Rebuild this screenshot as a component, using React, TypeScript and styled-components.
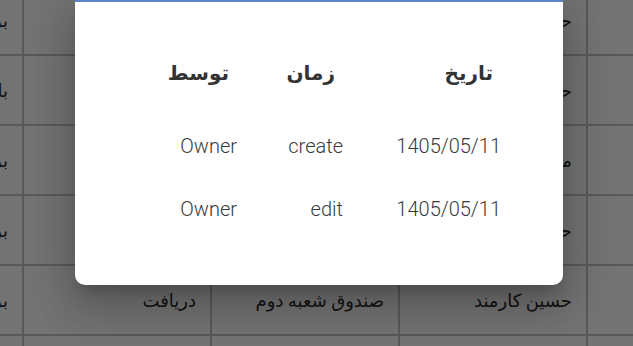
import React from "react";
import styled, { createGlobalStyle } from "styled-components";

const Global = createGlobalStyle`
  html, body { margin: 0; padding: 0; width: 633px; height: 346px; overflow: hidden; background: #fff; }
  * { box-sizing: border-box; }
  body { font-family: Roboto, "DejaVu Sans", sans-serif; }
`;

const Page = styled.div`
  width: 633px;
  height: 346px;
  overflow: hidden;
  position: relative;
  direction: rtl;
`;

const BgTable = styled.div`
  display: grid;
  grid-template-columns: 47px 188px 188px 188px 188px;
  grid-auto-rows: 70px;
  width: 799px;
  margin-top: -14px;
  direction: rtl;
`;

const BgCell = styled.div`
  display: flex;
  align-items: center;
  padding: 0 14px;
  border-bottom: 2px solid #c6c6c8;
  border-left: 2px solid #c6c6c8;
  font-size: 18px;
  color: #2a2a2a;
  white-space: nowrap;
  overflow: hidden;
`;

const Overlay = styled.div`
  position: absolute;
  inset: 0;
  background: rgba(0, 0, 0, 0.55);
`;

const Dialog = styled.div`
  position: absolute;
  left: 75px;
  top: 0;
  width: 488px;
  height: 285px;
  background: #fff;
  border-top: 2px solid #5a84c8;
  border-radius: 0 0 10px 10px;
  box-shadow: 0 11px 15px -7px rgba(0, 0, 0, 0.2), 0 24px 38px 3px rgba(0, 0, 0, 0.14),
    0 9px 46px 8px rgba(0, 0, 0, 0.12);
  padding: 39px 47px 0 0;
  direction: rtl;
`;

const Grid = styled.div`
  display: grid;
  grid-template-columns: 158px 106px 120px;
  grid-auto-rows: auto;
`;

const Head = styled.div`
  display: flex;
  align-items: center;
  height: 63px;
  margin-bottom: 10px;
  padding-right: 23px;
  font-size: 20px;
  font-weight: 700;
  color: #333;
  white-space: nowrap;
`;

const Cell = styled.div`
  display: flex;
  align-items: center;
  height: 63px;
  padding-right: 15px;
  font-size: 20px;
  font-weight: 300;
  color: #3a3a3a;
  white-space: nowrap;
`;

const bgRows: string[][] = [
  ["", "حسن مدیر", "", "", "برداشت"],
  ["", "حسین کارمند", "", "", "بانک"],
  ["", "مریم حسابدار", "", "", "برداشت"],
  ["", "حسن مدیر", "", "", "برداشت"],
  ["", "حسین کارمند", "صندوق شعبه دوم", "دریافت", "برداشت"],
  ["", "", "", "", ""],
];

const logs = [
  { date: "1405/05/11", action: "create", by: "Owner" },
  { date: "1405/05/11", action: "edit", by: "Owner" },
];

export default function App() {
  return (
    <Page>
      <Global />
      <BgTable>
        {bgRows.flatMap((r, i) => r.map((c, j) => <BgCell key={`${i}-${j}`}>{c}</BgCell>))}
      </BgTable>
      <Overlay />
      <Dialog>
        <Grid>
          <Head>تاریخ</Head>
          <Head>زمان</Head>
          <Head>توسط</Head>
          {logs.map((l, i) => (
            <React.Fragment key={i}>
              <Cell>{l.date}</Cell>
              <Cell>{l.action}</Cell>
              <Cell>{l.by}</Cell>
            </React.Fragment>
          ))}
        </Grid>
      </Dialog>
    </Page>
  );
}
